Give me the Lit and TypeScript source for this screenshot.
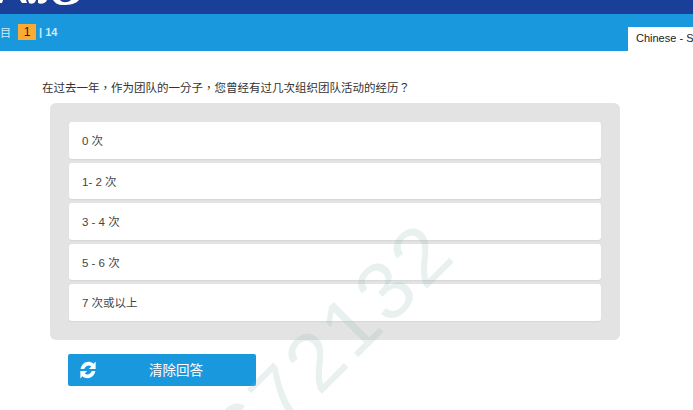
import { LitElement, html, css } from "lit";
import { customElement } from "lit/decorators.js";

const OPTIONS = ["0 次", "1- 2 次", "3 - 4 次", "5 - 6 次", "7 次或以上"];

@customElement("app-root")
export class AppRoot extends LitElement {
  static styles = css`
    :host {
      display: block;
      width: 693px;
      height: 410px;
      position: relative;
      overflow: hidden;
      background: #fff;
      font-family: "Liberation Sans", "Noto Sans CJK SC", sans-serif;
      font-size: 11px;
      color: #333;
    }
    .top {
      height: 14px;
      background: #1a3f99;
      overflow: hidden;
    }
    .top svg { display: block; }
    .bar {
      height: 37px;
      background: #1a98dd;
      display: flex;
      justify-content: space-between;
      align-items: flex-end;
      box-sizing: border-box;
    }
    .pager {
      align-self: center;
      display: flex;
      align-items: center;
      color: #cfeafa;
      font-weight: bold;
      font-size: 11px;
      margin-top: -1px;
    }
    .pager .mu { width: 11px; font-weight: normal; overflow: hidden; font-size: 11px; }
    .num {
      width: 18px;
      height: 16px;
      margin: 0 3px 0 7px;
      background: #fbaa33;
      color: #222;
      font-weight: normal;
      font-size: 12px;
      text-align: center;
      line-height: 16px;
    }
    .tab {
      width: 65px;
      height: 24px;
      box-sizing: border-box;
      padding: 5px 0 0 8px;
      background: #fff;
      color: #222;
      font-size: 11px;
      white-space: nowrap;
      overflow: hidden;
    }
    .question {
      margin: 30px 0 0 42px;
      height: 15px;
      line-height: 15px;
      font-family: "Liberation Sans", "Noto Sans CJK TC", sans-serif;
      font-size: 11.5px;
      color: #333;
    }
    .panel {
      margin: 7px 0 0 50px;
      width: 570px;
      height: 237px;
      box-sizing: border-box;
      padding: 19px 19px 0;
      background: #e3e3e3;
      border-radius: 6px;
      display: flex;
      flex-direction: column;
      gap: 4px;
    }
    .opt {
      height: 36.5px;
      flex: none;
      box-sizing: border-box;
      padding-left: 13px;
      display: flex;
      align-items: center;
      background: #fff;
      border-radius: 3px;
      box-shadow: 0 1px 1px #d6d6d6;
      font-size: 11.5px;
      color: #444;
    }
    .clear {
      margin: 14px 0 0 68px;
      width: 188px;
      height: 32px;
      background: #1a98dd;
      border-radius: 2px;
      color: #fff;
      font-size: 13.5px;
      line-height: 33px;
      display: flex;
      align-items: flex-start;
    }
    .clear svg { margin: 7px 0 0 11px; flex: none; }
    .clear span { margin-left: 52px; }
    .wm {
      position: absolute;
      left: 229px;
      top: 400px;
      font-size: 82px;
      font-family: "Liberation Sans", sans-serif;
      color: rgba(140, 185, 175, 0.2);
      transform: rotate(-45deg);
      transform-origin: left center;
      white-space: nowrap;
      letter-spacing: 4px;
      pointer-events: none;
    }
  `;

  render() {
    return html`
      <div class="top">
        <svg width="90" height="14" viewBox="0 0 90 14" fill="#fff" aria-hidden="true">
          <path d="M0 0 H3 L2 3 H0 Z" />
          <path d="M20 0 H26 L27 3 H22 Z" />
          <path d="M28 0 H36 L35 2 C34 4 30 4 29 3 Z" />
          <path d="M38 0 H47 C46 3 41 5 38 3 Z" />
          <path d="M53 0 H60 C62 3 68 3 71 0 H79 C76 4 70 5 63 5 C58 5 55 3 53 0 Z" />
        </svg>
      </div>
      <div class="bar">
        <div class="pager">
          <span class="mu">目</span>
          <span class="num">1</span>
          <span>| 14</span>
        </div>
        <div class="tab">Chinese - S</div>
      </div>
      <div class="question">在过去一年，作为团队的一分子，您曾经有过几次组织团队活动的经历？</div>
      <div class="panel">
        ${OPTIONS.map((o) => html`<div class="opt">${o}</div>`)}
      </div>
      <div class="clear">
        <svg width="18" height="18" viewBox="0 0 20 18" preserveAspectRatio="none" aria-hidden="true">
          <path fill="#fff" d="M18.5 0.5 V8 H11 L13.6 5.4 C11 3.6 7.2 4.6 5.8 8 H1.8 C3.2 1.4 10.6 -1.4 16.2 2.8 Z" />
          <path fill="#fff" d="M1.5 17.5 V10 H9 L6.4 12.6 C9 14.4 12.8 13.4 14.2 10 H18.2 C16.8 16.6 9.4 19.4 3.8 15.2 Z" />
        </svg>
        <span>清除回答</span>
      </div>
      <div class="wm">672132</div>
    `;
  }
}
